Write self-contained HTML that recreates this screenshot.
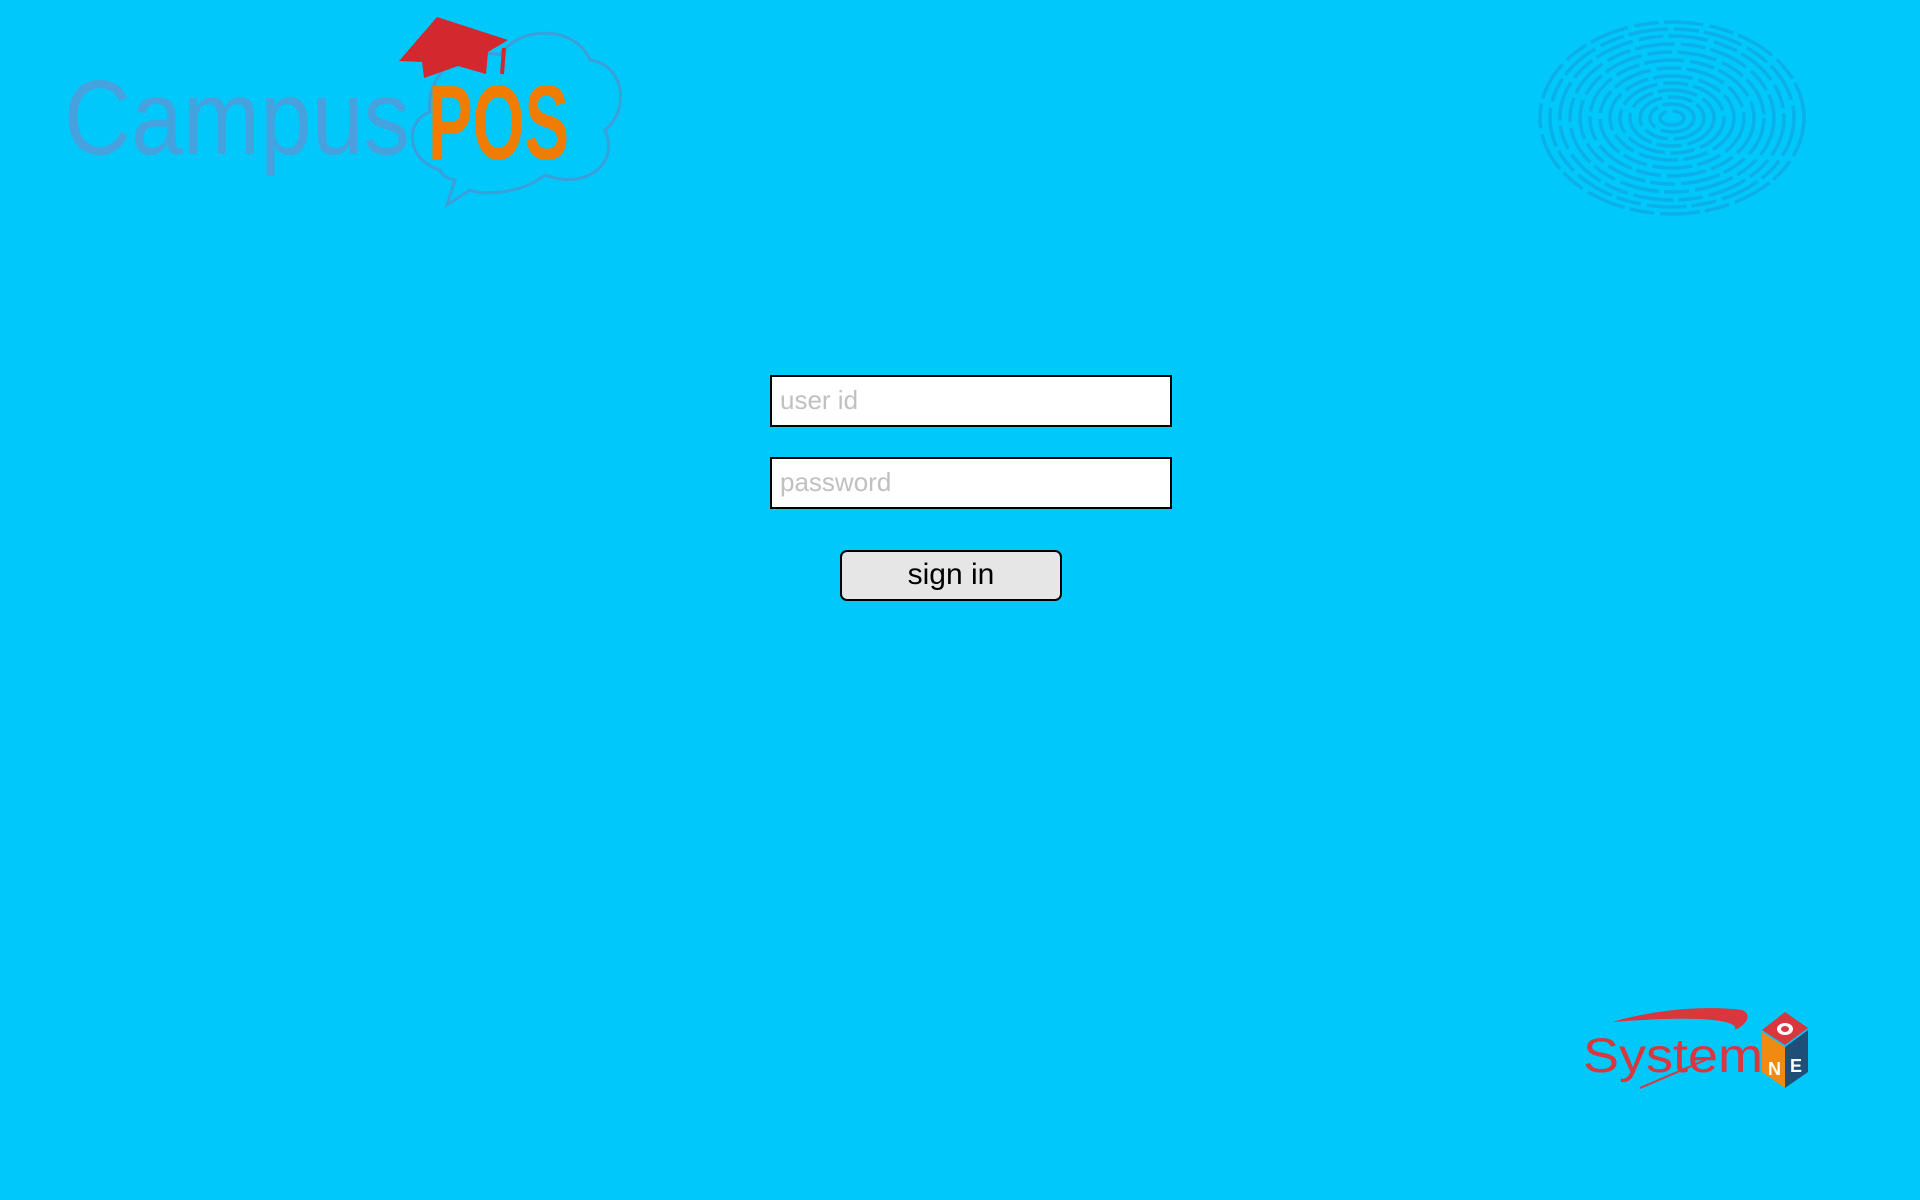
<!DOCTYPE html>
<html><head><meta charset="utf-8"><style>
html,body{margin:0;padding:0}
body{width:1920px;height:1200px;background:#00c8fa;position:relative;overflow:hidden;font-family:"Liberation Sans",Arial,sans-serif}
.in{position:absolute;left:770px;width:402px;height:52px;box-sizing:border-box;border:2px solid #000;background:#fff;color:#c0c0c0;font-size:26px;line-height:46px;padding-left:8px}
.btn{position:absolute;left:840px;top:550px;width:222px;height:51px;box-sizing:border-box;border:2px solid #000;border-radius:7px;background:#e6e6e6;text-align:center;font-size:30px;line-height:45px;color:#000}
svg{position:absolute;left:0;top:0}
</style></head><body>
<svg width="1920" height="1200" viewBox="0 0 1920 1200">
 <g fill="none" stroke="#0bb0e8" stroke-width="3.5" stroke-dasharray="40 6 25 5">
  <ellipse cx="1672" cy="118" rx="12" ry="7"/>
  <ellipse cx="1672" cy="118" rx="22" ry="14"/>
  <ellipse cx="1672" cy="118" rx="32" ry="21"/>
  <ellipse cx="1672" cy="118" rx="42" ry="28"/>
  <ellipse cx="1672" cy="118" rx="52" ry="35"/>
  <ellipse cx="1672" cy="118" rx="62" ry="42"/>
  <ellipse cx="1672" cy="118" rx="72" ry="50"/>
  <ellipse cx="1672" cy="118" rx="82" ry="58"/>
  <ellipse cx="1672" cy="118" rx="92" ry="66"/>
  <ellipse cx="1672" cy="118" rx="102" ry="74"/>
  <ellipse cx="1672" cy="118" rx="112" ry="82"/>
  <ellipse cx="1672" cy="118" rx="122" ry="89"/>
  <ellipse cx="1672" cy="118" rx="132" ry="96"/>
 </g>
 <path d="M440 170 C405 160 405 120 430 112 C425 75 460 45 500 55 C520 25 575 25 590 60 C625 65 630 110 605 130 C620 165 585 190 545 175 C520 195 480 195 470 190 L447 205 L455 180 C445 178 442 174 440 170 Z" fill="none" stroke="#3a9fdb" stroke-width="3"/>
 <text x="64" y="154" font-size="106" fill="#45a2de" textLength="346" lengthAdjust="spacingAndGlyphs" font-family="Liberation Sans, sans-serif">Campus</text>
 <text x="428" y="159" font-size="106" font-weight="bold" fill="#f07d00" textLength="141" lengthAdjust="spacingAndGlyphs" font-family="Liberation Sans Narrow, Liberation Sans, sans-serif">POS</text>
 <polygon points="437,17 508,40 488,52 486,74 458,66 424,78 422,62 399,61" fill="#d2282e"/>
 <path d="M504 48 L502 74" stroke="#d2282e" stroke-width="4"/>
 <path d="M1612 1022 C1660 1008 1710 1006 1742 1010 C1752 1014 1748 1024 1735 1030 C1740 1020 1700 1015 1612 1022 Z" fill="#d9363e"/>
 <path d="M1640 1088 L1710 1058" stroke="#d9363e" stroke-width="2"/>
 <text x="1583" y="1072" font-size="48" fill="#d9363e" textLength="180" lengthAdjust="spacingAndGlyphs">System</text>
 <polygon points="1785,1012 1808,1028 1785,1045 1762,1030" fill="#d9363e"/>
 <ellipse cx="1785" cy="1029" rx="8" ry="6" fill="#fff"/>
 <ellipse cx="1785" cy="1029" rx="4" ry="3" fill="#d9363e"/>
 <polygon points="1762,1032 1785,1047 1785,1088 1762,1072" fill="#f08a10"/>
 <polygon points="1785,1047 1808,1030 1808,1072 1785,1088" fill="#1f4e79"/>
 <text x="1768" y="1075" font-size="18" font-weight="bold" fill="#fff">N</text>
 <text x="1790" y="1072" font-size="18" font-weight="bold" fill="#fff">E</text>
</svg>
<div class="in" style="top:375px">user id</div>
<div class="in" style="top:457px">password</div>
<div class="btn">sign in</div>
</body></html>
